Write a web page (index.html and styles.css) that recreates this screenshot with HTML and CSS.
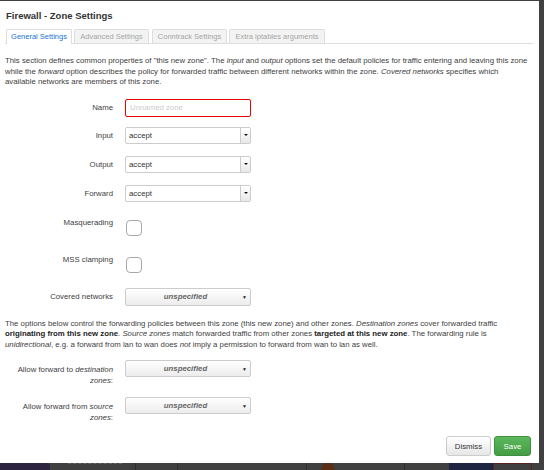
FILE: index.html
```html
<!DOCTYPE html>
<html>
<head>
<meta charset="utf-8">
<link rel="stylesheet" href="styles.css">
</head>
<body>
<div class="modal">
  <h3 class="title">Firewall - Zone Settings</h3>
  <ul class="tabs">
    <li class="tab t1 active">General Settings</li>
    <li class="tab t2">Advanced Settings</li>
    <li class="tab t3">Conntrack Settings</li>
    <li class="tab t4">Extra iptables arguments</li>
  </ul>
  <p class="desc desc1">This section defines common properties of "this new zone". The <em>input</em> and <em>output</em> options set the default policies for traffic entering and leaving this zone while the <em>forward</em> option describes the policy for forwarded traffic between different networks within the zone. <em>Covered networks</em> specifies which<br>available networks are members of this zone.</p>

  <div class="row r-name">
    <label class="lbl">Name</label>
    <input class="text invalid" type="text" placeholder="Unnamed zone">
  </div>
  <div class="row r-sel r-in">
    <label class="lbl">Input</label>
    <div class="select"><span class="val">accept</span><span class="btn"><span class="tri"></span></span></div>
  </div>
  <div class="row r-sel">
    <label class="lbl">Output</label>
    <div class="select"><span class="val">accept</span><span class="btn"><span class="tri"></span></span></div>
  </div>
  <div class="row r-sel">
    <label class="lbl">Forward</label>
    <div class="select"><span class="val">accept</span><span class="btn"><span class="tri"></span></span></div>
  </div>
  <div class="row r-masq">
    <label class="lbl">Masquerading</label>
    <span class="check"></span>
  </div>
  <div class="row r-mss">
    <label class="lbl">MSS clamping</label>
    <span class="check"></span>
  </div>
  <div class="row r-cov">
    <label class="lbl">Covered networks</label>
    <div class="drop"><span class="dval">unspecified</span><span class="darr">▼</span></div>
  </div>

  <p class="desc desc2">The options below control the forwarding policies between this zone (this new zone) and other zones. <em>Destination zones</em> cover forwarded traffic <strong>originating from this new zone</strong>. <em>Source zones</em> match forwarded traffic from other zones <strong>targeted at this new zone</strong>. The forwarding rule is <em>unidirectional</em>, e.g. a forward from lan to wan does <em>not</em> imply a permission to forward from wan to lan as well.</p>

  <div class="row r-fwd1">
    <label class="lbl two">Allow forward to <em>destination zones</em>:</label>
    <div class="drop"><span class="dval">unspecified</span><span class="darr">▼</span></div>
  </div>
  <div class="row r-fwd2">
    <label class="lbl two">Allow forward from <em>source zones</em>:</label>
    <div class="drop"><span class="dval">unspecified</span><span class="darr">▼</span></div>
  </div>

  <div class="footer">
    <button class="b dismiss">Dismiss</button>
    <button class="b save">Save</button>
  </div>
</div>
<div class="strip">
  <span class="d d1"></span>
  <span class="d d2"></span>
  <span class="d d3"></span>
  <span class="d d4"></span>
  <span class="d d5"></span>
  <span class="d d6"></span>
  <span class="d d7"></span>
  <span class="d d8"></span>
</div>
</body>
</html>
```
FILE: styles.css
```css
html, body {
  margin: 0;
  padding: 0;
}
body {
  background: #404040;
  font-family: "Liberation Sans", Arial, sans-serif;
  font-size: 7.8px;
  color: #404040;
  width: 544px;
  height: 470px;
  overflow: hidden;
}
.modal {
  box-sizing: border-box;
  width: 539px;
  height: 462px;
  margin-top: 1px;
  background: #fff;
  padding: 0 6px 0 5px;
  display: flex;
  flex-direction: column;
}
.title {
  margin: 9px 0 0 1px;
  font-size: 9.5px;
  font-weight: bold;
  color: #333;
  line-height: 11px;
  height: 11px;
}
.tabs {
  list-style: none;
  margin: 8px 0 0 0;
  padding: 0;
  display: flex;
  gap: 2px;
  border-bottom: 1px solid #ddd;
  height: 14px;
}
.tab {
  box-sizing: border-box;
  height: 14px;
  padding: 0;
  text-align: center;
  line-height: 13px;
  border: 1px solid #ddd;
  border-bottom: none;
  border-radius: 2px 2px 0 0;
  background: #f3f3f3;
  color: #a5a5a5;
  font-size: 7.5px;
  white-space: nowrap;
}
.tab.active {
  background: #fff;
  color: #1a73d4;
  height: 15px;
  margin-left: 1px;
}
.t1 { width: 66px; }
.t2 { width: 75px; }
.t3 { width: 75px; margin-left: 1px; }
.t4 { width: 96px; }
.desc {
  margin: 0;
  line-height: 10.5px;
  color: #404040;
}
.desc1 { margin-top: 12px; }
.desc2 { margin-top: 13px; }
.desc strong { color: #222; }
.row {
  display: flex;
  align-items: flex-start;
  gap: 12px;
}
.lbl {
  width: 108px;
  flex: none;
  text-align: right;
  line-height: 10px;
  color: #404040;
}
.r-name { margin-top: 11px; }
.r-name .lbl, .r-sel .lbl { padding-top: 4px; }
.r-sel { margin-top: 12px; }
.r-sel.r-in { margin-top: 10px; }
.text {
  box-sizing: border-box;
  width: 126px;
  height: 18px;
  margin: 0;
  border: 1px solid #e60000;
  border-radius: 2px;
  padding: 0 4px;
  font: inherit;
  font-size: 7.8px;
  outline: none;
}
.text::placeholder { color: #ccc; }
.select {
  box-sizing: border-box;
  width: 126px;
  height: 17px;
  border: 1px solid #ccc;
  border-radius: 2px;
  display: flex;
  background: #fff;
}
.val {
  flex: 1;
  line-height: 15px;
  padding-left: 3px;
  color: #333;
}
.btn {
  width: 9px;
  border-left: 1px solid #ccc;
  background: linear-gradient(#fff, #e8e8e8);
  display: flex;
  align-items: center;
  justify-content: center;
}
.tri {
  width: 0;
  height: 0;
  border-left: 2px solid transparent;
  border-right: 2px solid transparent;
  border-top: 2px solid #111;
}
.r-masq { margin-top: 16px; }
.r-mss { margin-top: 19px; }
.r-masq .lbl, .r-mss .lbl { padding-top: 0; }
.check {
  box-sizing: border-box;
  width: 16px;
  height: 16px;
  margin-top: 2px;
  margin-left: 1px;
  border: 1px solid #a8a8a8;
  border-radius: 4px;
  background: #fff;
}
.r-cov { margin-top: 15px; }
.r-cov .lbl { padding-top: 4px; }
.drop {
  box-sizing: border-box;
  width: 126px;
  height: 18px;
  border: 1px solid #ccc;
  border-radius: 2px;
  background: linear-gradient(#fff, #ececec);
  display: flex;
  align-items: center;
}
.r-fwd1 .drop, .r-fwd2 .drop { height: 17px; }
.dval {
  flex: 1;
  text-align: center;
  font-style: italic;
  font-weight: bold;
  color: #666;
  padding-left: 6px;
}
.darr {
  font-size: 5px;
  color: #222;
  width: 11px;
  text-align: center;
}
.r-fwd1 { margin-top: 10px; }
.r-fwd2 { margin-top: 11px; }
.lbl.two {
  line-height: 11px;
  padding-top: 4px;
  padding-left: 4px;
  box-sizing: border-box;
}
.footer {
  margin-top: auto;
  margin-bottom: 7px;
  display: flex;
  justify-content: flex-end;
  gap: 3px;
  padding-right: 2px;
}
.b {
  box-sizing: border-box;
  height: 20px;
  border-radius: 3px;
  font: inherit;
  font-size: 7.8px;
  padding: 0;
}
.dismiss {
  width: 45px;
  border: 1px solid #ccc;
  background: linear-gradient(#fff, #e6e6e6);
  color: #333;
}
.save {
  width: 37px;
  border: 1px solid #3e8f3e;
  background: linear-gradient(#5cb85c, #449d44);
  color: #fff;
}
.strip {
  height: 7px;
  display: flex;
  align-items: flex-start;
}
.d { display: block; height: 7px; flex: none; box-sizing: border-box; }
.d1 { width: 50px; background: #2d2540; border-radius: 0 3px 0 0; }
.d2 { width: 54px; margin-left: 18px; border-top: 1px dashed #666; }
.d3 { width: 43px; margin-left: 13px; border-left: 1px solid #2f2f2f; border-right: 1px solid #2f2f2f; }
.d4 { width: 120px; margin-left: 9px; border-right: 1px solid #2f2f2f; }
.d5 { width: 14px; margin-left: 14px; background: #5a2e14; border-radius: 7px 7px 0 0; }
.d6 { width: 70px; border-right: 1px solid #2f2f2f; }
.d7 { width: 44px; margin-left: 44px; background: #1d2540; }
.d8 { width: 39px; border: 1px solid #5a2222; border-bottom: none; }
```
